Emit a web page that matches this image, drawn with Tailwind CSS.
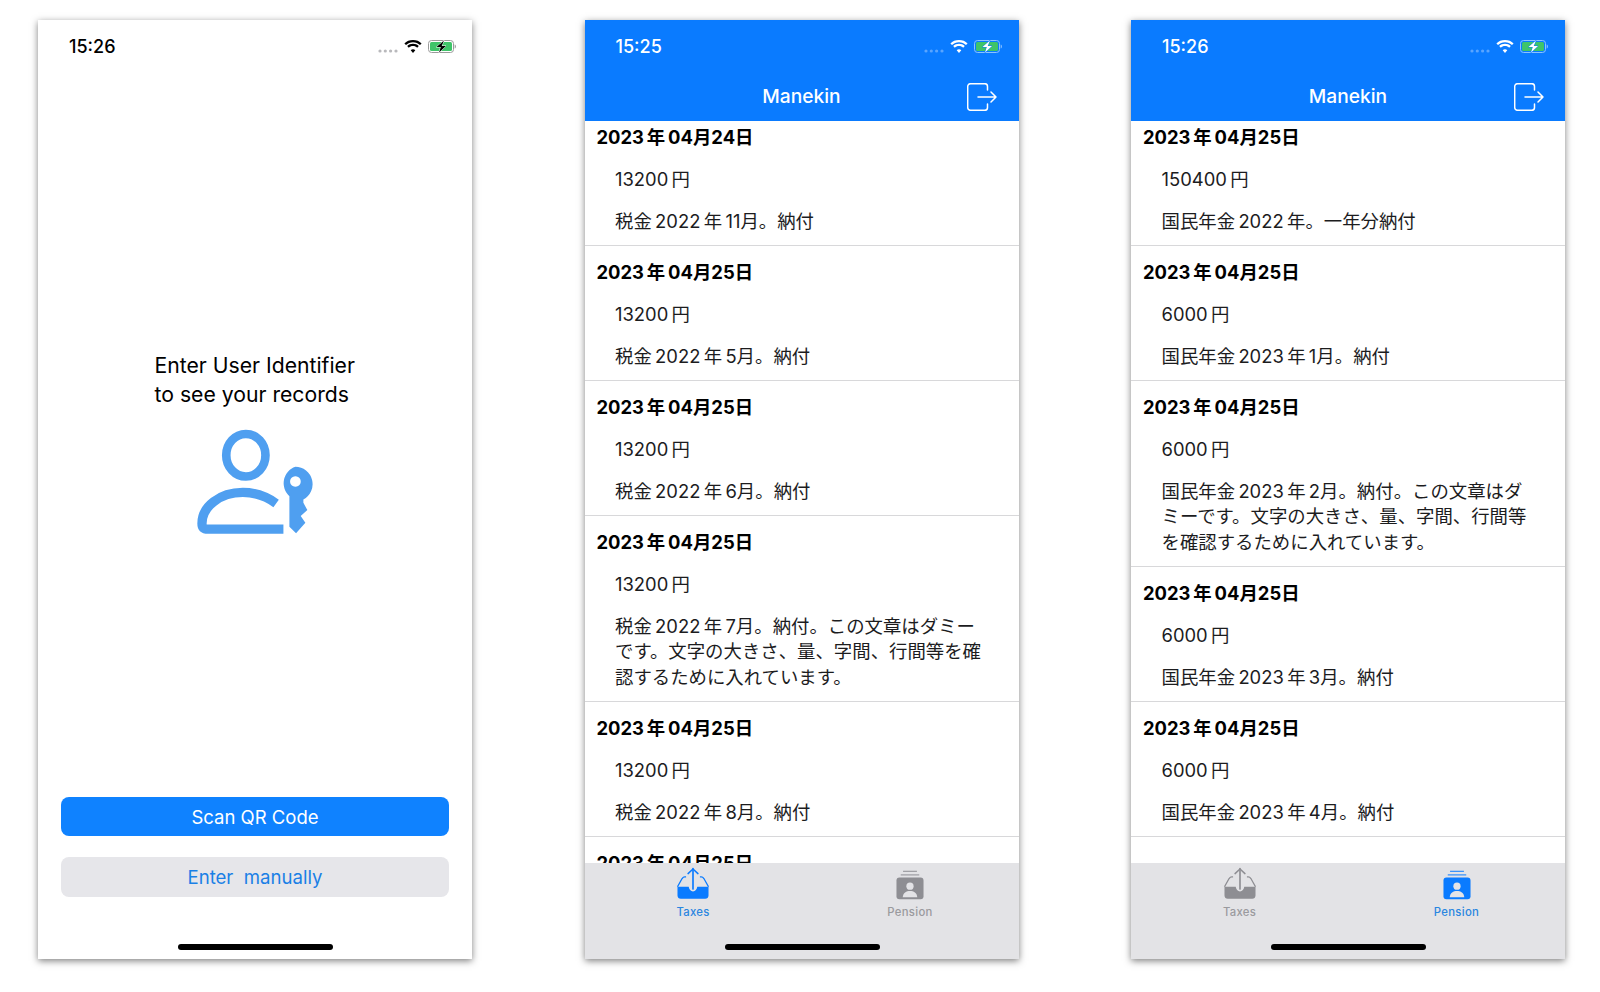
<!DOCTYPE html>
<html lang="ja">
  <head>
    <meta charset="UTF-8" />
    <meta name="viewport" content="width=device-width, initial-scale=1.0" />
    <title>Manekin</title>
    <script src="https://cdn.jsdelivr.net/npm/@tailwindcss/browser@4"></script>
  </head>
  <body class="bg-white text-[#1c1c1e] font-['Inter','Noto_Sans_CJK_JP',sans-serif]">
    <div class="flex gap-[112.5px] h-[992px] pl-[38px] pt-[20px] overflow-hidden">

      <!-- login -->
      <section class="relative flex flex-col w-[434px] h-[939px] bg-white shadow-[0_2px_7px_rgba(0,0,0,0.5)]">
        <div class="flex items-center justify-between h-[52px] pl-[31px] pr-[16px]">
          <span class="text-[18px] font-medium text-black">15:26</span>
          <div class="flex items-center gap-[6px]">
            <svg width="20" height="4" class="mt-[9px]" viewBox="0 0 20 4"><g fill="#b9b9bc"><circle cx="2" cy="2" r="1.600"/><circle cx="7.300" cy="2" r="1.600"/><circle cx="12.600" cy="2" r="1.600"/><circle cx="18" cy="2" r="1.600"/></g></svg>
            <svg width="18" height="13" viewBox="0 0 18 13"><path d="M9 2.200c2.800 0 5.200 1.100 7 2.900L17.600 3.400C15.400 1.200 12.400 0 9 0S2.600 1.200.4 3.400L2 5.100C3.800 3.300 6.200 2.200 9 2.200zM9 6.100c1.700 0 3.100.6 4.200 1.700l1.600-1.700C13.300 4.600 11.300 3.800 9 3.800S4.700 4.600 3.200 6.100l1.600 1.700C5.900 6.700 7.300 6.100 9 6.100zM9 9.200c-.9 0-1.700.4-2.300 1L9 13l2.300-2.800c-.6-.6-1.400-1-2.300-1z" fill="#000"/></svg>
            <svg width="28" height="13" viewBox="0 0 28 13"><rect x="0.500" y="0.500" width="25" height="12" rx="3" fill="none" stroke="#9a9a9a"/><rect x="2" y="2" width="22" height="9" rx="1.500" fill="#3fc469"/><path d="M26.700 4.500c.8.300 1.200 1.100 1.200 2s-.4 1.700-1.200 2z" fill="#9a9a9a"/><path d="M16 0.500L8.500 7h4.300L11 12.500 18 6h-4.300z" fill="#000" stroke="#fff" stroke-width="1" paint-order="stroke"/></svg>
          </div>
        </div>
        <div class="mt-[279px] flex flex-col items-center">
          <p class="text-[21.200px] leading-[28.600px] text-black w-[201px] whitespace-nowrap">Enter User Identifier<br />to see your records</p>
          <svg class="mt-[17px] -ml-[2px]" width="123" height="112" viewBox="190 255 370 335">
            <ellipse cx="349" cy="345" rx="59" ry="64" fill="none" stroke="#4f9ff0" stroke-width="26"/>
            <path d="M440 490C405 465 370 457 340 457C270 457 217 500 217 550C217 563 224 567 235 567L462 567" fill="none" stroke="#4f9ff0" stroke-width="28"/>
            <path fill-rule="evenodd" d="M498 380a52 52 0 0 1 24 98l0 10l12 22l-20 18l14 20l-28 32l-20-20l0-92a52 52 0 0 1 18-88zM498 408a16 16 0 1 0 .1 0z" fill="#4f9ff0"/>
          </svg>
        </div>
        <div class="mt-auto flex flex-col gap-[21px] px-[23px] pb-[62px]">
          <button class="h-[39px] pt-[2px] rounded-[8px] bg-[#0f82ff] text-white text-[18.500px]">Scan QR Code</button>
          <button class="h-[40px] pt-[2px] rounded-[8px] bg-[#e6e6ea] text-[#1a80e6] text-[18.600px]">Enter&nbsp; manually</button>
        </div>
        <div class="absolute bottom-[9px] left-[140px] w-[155px] h-[6px] rounded-full bg-black"></div>
      </section>

      <!-- taxes -->
      <section class="relative flex flex-col w-[434px] h-[939px] bg-white shadow-[0_2px_7px_rgba(0,0,0,0.5)]">
        <header class="bg-[#0a7bff] text-white">
          <div class="flex items-center justify-between h-[52px] pl-[31px] pr-[17px]">
            <span class="text-[18px] font-medium">15:25</span>
            <div class="flex items-center gap-[6px]">
              <svg width="20" height="4" class="mt-[9px]" viewBox="0 0 20 4"><g fill="#5aa5ff"><circle cx="2" cy="2" r="1.600"/><circle cx="7.300" cy="2" r="1.600"/><circle cx="12.600" cy="2" r="1.600"/><circle cx="18" cy="2" r="1.600"/></g></svg>
              <svg width="18" height="13" viewBox="0 0 18 13"><path d="M9 2.200c2.800 0 5.200 1.100 7 2.900L17.600 3.400C15.400 1.200 12.400 0 9 0S2.600 1.200.4 3.400L2 5.100C3.800 3.300 6.200 2.200 9 2.200zM9 6.100c1.700 0 3.100.6 4.200 1.700l1.600-1.700C13.300 4.600 11.300 3.800 9 3.800S4.700 4.600 3.200 6.100l1.600 1.700C5.900 6.700 7.300 6.100 9 6.100zM9 9.200c-.9 0-1.700.4-2.300 1L9 13l2.300-2.800c-.6-.6-1.400-1-2.300-1z" fill="#fff"/></svg>
              <svg width="28" height="13" viewBox="0 0 28 13"><rect x="0.500" y="0.500" width="25" height="12" rx="3" fill="none" stroke="#8cc2ff"/><rect x="2" y="2" width="22" height="9" rx="1.500" fill="#3fc469"/><path d="M26.700 4.500c.8.300 1.200 1.100 1.200 2s-.4 1.700-1.200 2z" fill="#8cc2ff"/><path d="M16 0.500L8.500 7h4.300L11 12.500 18 6h-4.300z" fill="#fff" stroke="#0a7bff" stroke-width="1" paint-order="stroke"/></svg>
            </div>
          </div>
          <div class="flex items-center justify-between h-[49px] px-[21px]">
            <div class="w-[30px]"></div>
            <h1 class="text-[19.200px] font-medium -mt-[1px]">Manekin</h1>
            <svg width="30" height="28" viewBox="0 0 30 28" fill="none" stroke="#fff" stroke-width="1.500" stroke-linecap="round" stroke-linejoin="round"><path d="M20.500 7V3.500A2.800 2.800 0 0 0 17.700.7H3.500A2.800 2.800 0 0 0 .7 3.500v21a2.800 2.800 0 0 0 2.800 2.800h14.200a2.800 2.800 0 0 0 2.800-2.800V21"/><path d="M11 14h18M24 9l5 5-5 5"/></svg>
          </div>
        </header>
        <div class="flex-1 overflow-hidden">
          <div class="-mt-[10px] text-[18.400px] leading-[25.500px]">
            <article class="pt-[13.500px] pb-[11px] border-b border-[#d8d8da]">
              <h2 class="pl-[12px] font-bold text-black">2023&#8201;年&#8201;04月24日</h2>
              <p class="mt-[16.500px] pl-[30.500px]">13200&#8201;円</p>
              <p class="mt-[16.500px] pl-[30.500px]">税金&#8201;2022&#8201;年&#8201;11月。納付</p>
            </article>
            <article class="pt-[13.500px] pb-[11px] border-b border-[#d8d8da]">
              <h2 class="pl-[12px] font-bold text-black">2023&#8201;年&#8201;04月25日</h2>
              <p class="mt-[16.500px] pl-[30.500px]">13200&#8201;円</p>
              <p class="mt-[16.500px] pl-[30.500px]">税金&#8201;2022&#8201;年&#8201;5月。納付</p>
            </article>
            <article class="pt-[13.500px] pb-[11px] border-b border-[#d8d8da]">
              <h2 class="pl-[12px] font-bold text-black">2023&#8201;年&#8201;04月25日</h2>
              <p class="mt-[16.500px] pl-[30.500px]">13200&#8201;円</p>
              <p class="mt-[16.500px] pl-[30.500px]">税金&#8201;2022&#8201;年&#8201;6月。納付</p>
            </article>
            <article class="pt-[13.500px] pb-[11px] border-b border-[#d8d8da]">
              <h2 class="pl-[12px] font-bold text-black">2023&#8201;年&#8201;04月25日</h2>
              <p class="mt-[16.500px] pl-[30.500px]">13200&#8201;円</p>
              <p class="mt-[16.500px] pl-[30.500px] whitespace-nowrap">税金&#8201;2022&#8201;年&#8201;7月。納付。この文章はダミー<br />です。文字の大きさ、量、字間、行間等を確<br />認するために入れています。</p>
            </article>
            <article class="pt-[13.500px] pb-[11px] border-b border-[#d8d8da]">
              <h2 class="pl-[12px] font-bold text-black">2023&#8201;年&#8201;04月25日</h2>
              <p class="mt-[16.500px] pl-[30.500px]">13200&#8201;円</p>
              <p class="mt-[16.500px] pl-[30.500px]">税金&#8201;2022&#8201;年&#8201;8月。納付</p>
            </article>
            <article class="pt-[13.500px] pb-[11px]">
              <h2 class="pl-[12px] font-bold text-black">2023&#8201;年&#8201;04月25日</h2>
            </article>
          </div>
        </div>
        <nav class="grid grid-cols-2 h-[96px] bg-[#e3e3e6]">
          <a class="flex flex-col items-center pt-[4px] text-[#2a86e0]">
            <svg width="36" height="33" viewBox="285 80 108 100"><path d="M339 85v62" stroke="#0a7bff" stroke-width="5" stroke-linecap="round" fill="none"/><path d="M324 100l15-14 15 14" stroke="#0a7bff" stroke-width="4.500" stroke-linecap="round" stroke-linejoin="round" fill="none"/><path d="M318 110h-4c-4 0-6 2-8 5l-14 25M360 110h4c4 0 6 2 8 5l14 25" stroke="#0a7bff" stroke-width="4" fill="none"/><path d="M292 140h34c1 8 6 14 13 14s12-6 13-14h34v26c0 6-4 10-10 10h-74c-6 0-10-4-10-10z" fill="#0a7bff"/></svg>
            <span class="text-[11.300px] leading-[14px] mt-[5px] font-medium tracking-[0.3px]">Taxes</span>
          </a>
          <a class="flex flex-col items-center pt-[4px] text-[#9a9a9e]">
            <svg width="36" height="33" viewBox="935 80 108 100"><path d="M968 93h42M961 104h56" stroke="#8e8e93" stroke-width="3" fill="none"/><rect x="948" y="112" width="82" height="66" rx="9" fill="#8e8e93"/><circle cx="989" cy="138" r="11" fill="#e3e3e6"/><path d="M967 172c1-14 11-19 22-19s21 5 22 19z" fill="#e3e3e6"/></svg>
            <span class="text-[11.300px] leading-[14px] mt-[5px] font-medium tracking-[0.3px]">Pension</span>
          </a>
        </nav>
        <div class="absolute bottom-[9px] left-[140px] w-[155px] h-[6px] rounded-full bg-black"></div>
      </section>

      <!-- pension -->
      <section class="relative flex flex-col w-[434px] h-[939px] bg-white shadow-[0_2px_7px_rgba(0,0,0,0.5)]">
        <header class="bg-[#0a7bff] text-white">
          <div class="flex items-center justify-between h-[52px] pl-[31px] pr-[17px]">
            <span class="text-[18px] font-medium">15:26</span>
            <div class="flex items-center gap-[6px]">
              <svg width="20" height="4" class="mt-[9px]" viewBox="0 0 20 4"><g fill="#5aa5ff"><circle cx="2" cy="2" r="1.600"/><circle cx="7.300" cy="2" r="1.600"/><circle cx="12.600" cy="2" r="1.600"/><circle cx="18" cy="2" r="1.600"/></g></svg>
              <svg width="18" height="13" viewBox="0 0 18 13"><path d="M9 2.200c2.800 0 5.200 1.100 7 2.900L17.600 3.400C15.400 1.200 12.400 0 9 0S2.600 1.200.4 3.400L2 5.100C3.800 3.300 6.200 2.200 9 2.200zM9 6.100c1.700 0 3.100.6 4.200 1.700l1.600-1.700C13.300 4.600 11.300 3.800 9 3.800S4.700 4.600 3.200 6.100l1.600 1.700C5.900 6.700 7.300 6.100 9 6.100zM9 9.200c-.9 0-1.700.4-2.300 1L9 13l2.300-2.800c-.6-.6-1.400-1-2.300-1z" fill="#fff"/></svg>
              <svg width="28" height="13" viewBox="0 0 28 13"><rect x="0.500" y="0.500" width="25" height="12" rx="3" fill="none" stroke="#8cc2ff"/><rect x="2" y="2" width="22" height="9" rx="1.500" fill="#3fc469"/><path d="M26.700 4.500c.8.300 1.200 1.100 1.200 2s-.4 1.700-1.200 2z" fill="#8cc2ff"/><path d="M16 0.500L8.500 7h4.300L11 12.500 18 6h-4.300z" fill="#fff" stroke="#0a7bff" stroke-width="1" paint-order="stroke"/></svg>
            </div>
          </div>
          <div class="flex items-center justify-between h-[49px] px-[21px]">
            <div class="w-[30px]"></div>
            <h1 class="text-[19.200px] font-medium -mt-[1px]">Manekin</h1>
            <svg width="30" height="28" viewBox="0 0 30 28" fill="none" stroke="#fff" stroke-width="1.500" stroke-linecap="round" stroke-linejoin="round"><path d="M20.500 7V3.500A2.800 2.800 0 0 0 17.700.7H3.500A2.800 2.800 0 0 0 .7 3.500v21a2.800 2.800 0 0 0 2.800 2.800h14.200a2.800 2.800 0 0 0 2.800-2.800V21"/><path d="M11 14h18M24 9l5 5-5 5"/></svg>
          </div>
        </header>
        <div class="flex-1 overflow-hidden">
          <div class="-mt-[10px] text-[18.400px] leading-[25.500px]">
            <article class="pt-[13.500px] pb-[11px] border-b border-[#d8d8da]">
              <h2 class="pl-[12px] font-bold text-black">2023&#8201;年&#8201;04月25日</h2>
              <p class="mt-[16.500px] pl-[30.500px]">150400&#8201;円</p>
              <p class="mt-[16.500px] pl-[30.500px]">国民年金&#8201;2022&#8201;年。一年分納付</p>
            </article>
            <article class="pt-[13.500px] pb-[11px] border-b border-[#d8d8da]">
              <h2 class="pl-[12px] font-bold text-black">2023&#8201;年&#8201;04月25日</h2>
              <p class="mt-[16.500px] pl-[30.500px]">6000&#8201;円</p>
              <p class="mt-[16.500px] pl-[30.500px]">国民年金&#8201;2023&#8201;年&#8201;1月。納付</p>
            </article>
            <article class="pt-[13.500px] pb-[11px] border-b border-[#d8d8da]">
              <h2 class="pl-[12px] font-bold text-black">2023&#8201;年&#8201;04月25日</h2>
              <p class="mt-[16.500px] pl-[30.500px]">6000&#8201;円</p>
              <p class="mt-[16.500px] pl-[30.500px] whitespace-nowrap">国民年金&#8201;2023&#8201;年&#8201;2月。納付。この文章はダ<br />ミーです。文字の大きさ、量、字間、行間等<br />を確認するために入れています。</p>
            </article>
            <article class="pt-[13.500px] pb-[11px] border-b border-[#d8d8da]">
              <h2 class="pl-[12px] font-bold text-black">2023&#8201;年&#8201;04月25日</h2>
              <p class="mt-[16.500px] pl-[30.500px]">6000&#8201;円</p>
              <p class="mt-[16.500px] pl-[30.500px]">国民年金&#8201;2023&#8201;年&#8201;3月。納付</p>
            </article>
            <article class="pt-[13.500px] pb-[11px] border-b border-[#d8d8da]">
              <h2 class="pl-[12px] font-bold text-black">2023&#8201;年&#8201;04月25日</h2>
              <p class="mt-[16.500px] pl-[30.500px]">6000&#8201;円</p>
              <p class="mt-[16.500px] pl-[30.500px]">国民年金&#8201;2023&#8201;年&#8201;4月。納付</p>
            </article>
          </div>
        </div>
        <nav class="grid grid-cols-2 h-[96px] bg-[#e3e3e6]">
          <a class="flex flex-col items-center pt-[4px] text-[#9a9a9e]">
            <svg width="36" height="33" viewBox="285 80 108 100"><path d="M339 85v62" stroke="#8e8e93" stroke-width="5" stroke-linecap="round" fill="none"/><path d="M324 100l15-14 15 14" stroke="#8e8e93" stroke-width="4.500" stroke-linecap="round" stroke-linejoin="round" fill="none"/><path d="M318 110h-4c-4 0-6 2-8 5l-14 25M360 110h4c4 0 6 2 8 5l14 25" stroke="#8e8e93" stroke-width="4" fill="none"/><path d="M292 140h34c1 8 6 14 13 14s12-6 13-14h34v26c0 6-4 10-10 10h-74c-6 0-10-4-10-10z" fill="#8e8e93"/></svg>
            <span class="text-[11.300px] leading-[14px] mt-[5px] font-medium tracking-[0.3px]">Taxes</span>
          </a>
          <a class="flex flex-col items-center pt-[4px] text-[#2a86e0]">
            <svg width="36" height="33" viewBox="935 80 108 100"><path d="M968 93h42M961 104h56" stroke="#0a7bff" stroke-width="3" fill="none"/><rect x="948" y="112" width="82" height="66" rx="9" fill="#0a7bff"/><circle cx="989" cy="138" r="11" fill="#e3e3e6"/><path d="M967 172c1-14 11-19 22-19s21 5 22 19z" fill="#e3e3e6"/></svg>
            <span class="text-[11.300px] leading-[14px] mt-[5px] font-medium tracking-[0.3px]">Pension</span>
          </a>
        </nav>
        <div class="absolute bottom-[9px] left-[140px] w-[155px] h-[6px] rounded-full bg-black"></div>
      </section>

    </div>
  </body>
</html>
